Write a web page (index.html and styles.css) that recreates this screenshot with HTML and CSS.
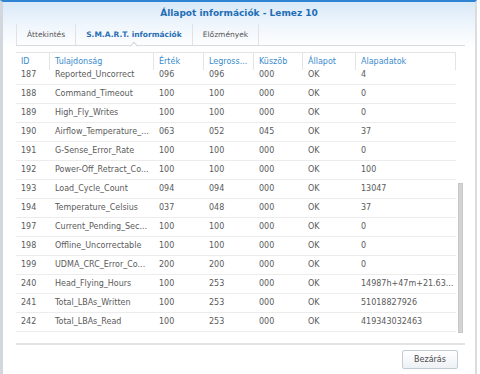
FILE: index.html
```html
<!DOCTYPE html>
<html lang="hu">
<head>
<meta charset="utf-8">
<title>Állapot információk</title>
<link rel="stylesheet" href="styles.css">
</head>
<body>
<div class="window">
  <div class="title">Állapot információk - Lemez 10</div>
  <div class="tabs">
    <div class="tab">Áttekintés</div>
    <div class="tab active">S.M.A.R.T. információk<span class="caret"></span></div>
    <div class="tab last">Előzmények</div>
  </div>
  <div class="grid">
    <div class="head row">
      <div class="cell c1">ID</div>
      <div class="cell c2">Tulajdonság</div>
      <div class="cell c3">Érték</div>
      <div class="cell c4">Legross...</div>
      <div class="cell c5">Küszöb</div>
      <div class="cell c6">Állapot</div>
      <div class="cell c7">Alapadatok</div>
    </div>
    <div class="body">
      <div class="rows">
        <div class="row first"><div class="cell c1">187</div><div class="cell c2">Reported_Uncorrect</div><div class="cell c3">096</div><div class="cell c4">096</div><div class="cell c5">000</div><div class="cell c6">OK</div><div class="cell c7">4</div></div>
        <div class="row"><div class="cell c1">188</div><div class="cell c2">Command_Timeout</div><div class="cell c3">100</div><div class="cell c4">100</div><div class="cell c5">000</div><div class="cell c6">OK</div><div class="cell c7">0</div></div>
        <div class="row"><div class="cell c1">189</div><div class="cell c2">High_Fly_Writes</div><div class="cell c3">100</div><div class="cell c4">100</div><div class="cell c5">000</div><div class="cell c6">OK</div><div class="cell c7">0</div></div>
        <div class="row"><div class="cell c1">190</div><div class="cell c2">Airflow_Temperature_...</div><div class="cell c3">063</div><div class="cell c4">052</div><div class="cell c5">045</div><div class="cell c6">OK</div><div class="cell c7">37</div></div>
        <div class="row"><div class="cell c1">191</div><div class="cell c2">G-Sense_Error_Rate</div><div class="cell c3">100</div><div class="cell c4">100</div><div class="cell c5">000</div><div class="cell c6">OK</div><div class="cell c7">0</div></div>
        <div class="row"><div class="cell c1">192</div><div class="cell c2">Power-Off_Retract_Co...</div><div class="cell c3">100</div><div class="cell c4">100</div><div class="cell c5">000</div><div class="cell c6">OK</div><div class="cell c7">100</div></div>
        <div class="row"><div class="cell c1">193</div><div class="cell c2">Load_Cycle_Count</div><div class="cell c3">094</div><div class="cell c4">094</div><div class="cell c5">000</div><div class="cell c6">OK</div><div class="cell c7">13047</div></div>
        <div class="row"><div class="cell c1">194</div><div class="cell c2">Temperature_Celsius</div><div class="cell c3">037</div><div class="cell c4">048</div><div class="cell c5">000</div><div class="cell c6">OK</div><div class="cell c7">37</div></div>
        <div class="row"><div class="cell c1">197</div><div class="cell c2">Current_Pending_Sec...</div><div class="cell c3">100</div><div class="cell c4">100</div><div class="cell c5">000</div><div class="cell c6">OK</div><div class="cell c7">0</div></div>
        <div class="row"><div class="cell c1">198</div><div class="cell c2">Offline_Uncorrectable</div><div class="cell c3">100</div><div class="cell c4">100</div><div class="cell c5">000</div><div class="cell c6">OK</div><div class="cell c7">0</div></div>
        <div class="row"><div class="cell c1">199</div><div class="cell c2">UDMA_CRC_Error_Co...</div><div class="cell c3">200</div><div class="cell c4">200</div><div class="cell c5">000</div><div class="cell c6">OK</div><div class="cell c7">0</div></div>
        <div class="row"><div class="cell c1">240</div><div class="cell c2">Head_Flying_Hours</div><div class="cell c3">100</div><div class="cell c4">253</div><div class="cell c5">000</div><div class="cell c6">OK</div><div class="cell c7">14987h+47m+21.63...</div></div>
        <div class="row"><div class="cell c1">241</div><div class="cell c2">Total_LBAs_Written</div><div class="cell c3">100</div><div class="cell c4">253</div><div class="cell c5">000</div><div class="cell c6">OK</div><div class="cell c7">51018827926</div></div>
        <div class="row"><div class="cell c1">242</div><div class="cell c2">Total_LBAs_Read</div><div class="cell c3">100</div><div class="cell c4">253</div><div class="cell c5">000</div><div class="cell c6">OK</div><div class="cell c7">419343032463</div></div>
      </div>
      <div class="track"><div class="thumb"></div></div>
    </div>
  </div>
  <div class="footer">
    <button class="btn">Bezárás</button>
  </div>
</div>
</body>
</html>
```
FILE: styles.css
```css
* { box-sizing: border-box; }
html, body { margin: 0; padding: 0; }
body {
  width: 480px;
  height: 374px;
  overflow: hidden;
  background: #ffffff;
  font-family: "DejaVu Sans", Verdana, sans-serif;
  color: #5a5a5a;
}
.window {
  width: 477px;
  height: 374px;
  border-top: 2px solid #2f83d3;
  border-left: 3px solid #d2d7dd;
  border-right: 2px solid #dcdcdc;
  padding: 0 10px 0 13px;
  background: linear-gradient(to bottom, #d8e9f8 0px, #eef5fc 22px, #ffffff 46px);
}
.title {
  height: 22px;
  line-height: 22px;
  text-align: center;
  font-size: 9px;
  font-weight: bold;
  color: #1e6db5;
  margin-right: -10px;
  margin-left: -13px;
}
.tabs {
  display: flex;
  height: 22px;
  border-bottom: 1px solid #d9dcdf;
}
.tab {
  position: relative;
  height: 21px;
  line-height: 21px;
  padding: 0 10px;
  border-left: 1px solid #e2e2e2;
  font-size: 7.5px;
  color: #555;
}
.tab.last { border-right: 1px solid #e2e2e2; }
.tab.active {
  font-weight: bold;
  color: #2a6fb5;
}
.caret {
  position: absolute;
  left: 50%;
  bottom: -4px;
  width: 6px;
  height: 6px;
  margin-left: -3px;
  background: #ffffff;
  border-top: 1px solid #d2d5d8;
  border-left: 1px solid #d2d5d8;
  transform: rotate(45deg);
}
.grid { margin-top: 6px; }
.row {
  display: flex;
  width: 440px;
  height: 19px;
  border-bottom: 1px solid #ececec;
}
.cell {
  height: 18px;
  line-height: 18px;
  padding-left: 5px;
  border-left: 1px solid transparent;
  font-size: 8px;
  white-space: nowrap;
  overflow: hidden;
}
.c1 { width: 33px; border-left: none; }
.c2 { width: 104px; }
.c3 { width: 50px; }
.c4 { width: 50px; }
.c5 { width: 49px; }
.c6 { width: 53px; }
.c7 { width: 101px; border-right: 1px solid transparent; }
.head.row {
  height: 18px;
  border-top: 1px solid #e4e4e4;
  border-bottom: none;
}
.head .cell {
  height: 17px;
  line-height: 17px;
  color: #3a8bcc;
  border-left-color: #e4e4e4;
}
.head .c7 { border-right-color: #e4e4e4; }
.body {
  display: flex;
  height: 264px;
}
.rows {
  width: 440px;
  height: 264px;
  overflow: hidden;
}
.row.first { margin-top: -4px; }
.track {
  display: flex;
  flex-direction: column;
  justify-content: flex-end;
  width: 5px;
  margin-left: 2px;
  padding-bottom: 1px;
}
.thumb {
  height: 150px;
  background: #d3d3d3;
  border: 1px solid #c8c8c8;
}
.footer {
  margin-top: 9px;
  border-top: 2px solid #e3e3e3;
  display: flex;
  justify-content: flex-end;
  padding: 5px 7px 0 0;
}
.btn {
  width: 56px;
  height: 19px;
  padding: 0;
  border: 1px solid #c3cbd3;
  border-radius: 2px;
  background: linear-gradient(to bottom, #ffffff, #edf1f5);
  font-family: "DejaVu Sans", Verdana, sans-serif;
  font-size: 8px;
  color: #4a4a4a;
}
```
